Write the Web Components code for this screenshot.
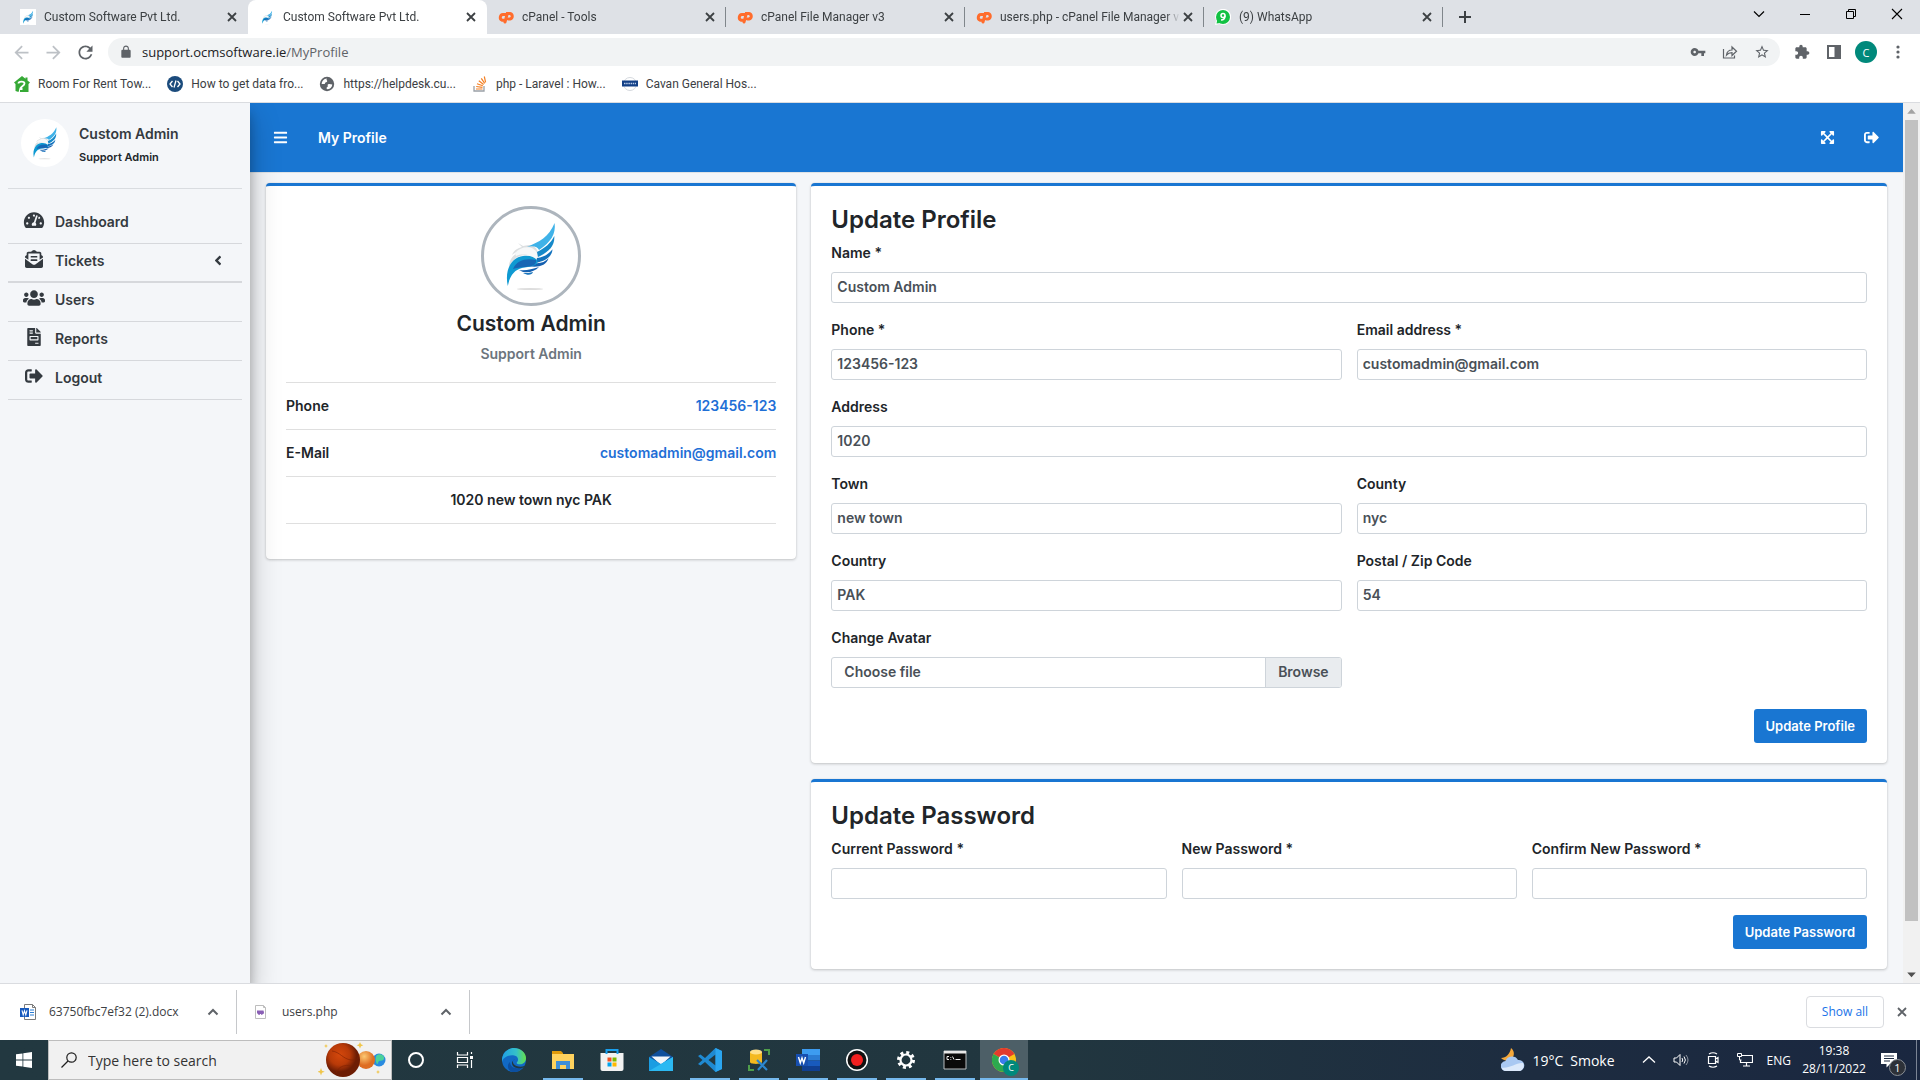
<!DOCTYPE html>
<html lang="en">
<head>
<meta charset="utf-8">
<title>Custom Software Pvt Ltd.</title>
<style>
  html, body { margin: 0; height: 100%; }
  body { overflow: hidden; font-family: "Open Sans", "Noto Sans", sans-serif; font-size: 12px; color: #3c4043; }
</style>
</head>
<body>
<desktop-screen></desktop-screen>
<script>
/* ---------- icon library: [viewBox, markup] ---------- */
const bird = `
  <g>
    <path d="M37 37l5 3 6-1c5 0 8 3 9 8l-1 7c-2-4-6-5-11-5-8 0-13 4-17 12 0-8 5-13 11-15-4 0-6 1-8 3 2-5 6-7 10-8z" fill="#dcdfe1"/>
    <path d="M34 47c6-7 18-8 22 0 1 3 0 5-1 7-4-5-13-7-20-4z" fill="#f6f8f9"/>
    <path d="M46 41c12-5 22-10 27.6-24C75 28 70 36 58 44c-1-3-6-5-12-3z" fill="#3fb2e8"/>
    <path d="M56 46c8-4 14-9 17.300-16C74 40 68 46 57 51z" fill="#1689c9"/>
    <path d="M56 52c7-1 12-4 15.500-8.700C71 51 64 55 55 57z" fill="#1272bd"/>
    <path d="M53 57c6 1 11-1 14.600-4.700C65 60 57 62 46 60z" fill="#1560b0"/>
    <path d="M26.800 80C23 62 32 51 42 50c7-1 11 1 14 4 2 4-3 6-9 7-10 1-17 4-20.200 19z" fill="#0f9ad2"/>
    <path d="M32 63c4-9 13-11 23-9 1 5-4 6-10 7-6 0-10 1-13 2z" fill="#1766b4"/>
    <path d="M38 64c7 1 13-1 20-3-4 4-9 6-16 5z" fill="#1560b0"/>
    <path d="M42 67c4 0 7 0 10-1-1 3-5 4-10 1z" fill="#1a75bd"/>
    <ellipse cx="49" cy="83" rx="13" ry="1" fill="#dddddd"/>
  </g>`;
const cp = `<g fill="none" stroke="#ff6c2c" stroke-width="3"><path d="M8 5.500H5a3 3 0 0 0-1 5.700h2" stroke-linecap="round"/><path d="M7 13l2.300-8.500H12a2.800 2.800 0 0 1 0 5.500h-1.500" stroke-linecap="round"/></g>`;
const ICONS = {
  bird: ['0 0 100 100', bird],
  birdfav: ['10 8 78 78', '<rect x="10" y="8" width="78" height="78" fill="#fff"/>' + bird],
  cpanel: ['0 0 16 16', cp],
  whatsapp: ['0 0 16 16', '<path d="M0 16l1-4.500A8 8 0 1 1 4.500 15z" fill="#fff"/><circle cx="8" cy="8" r="7" fill="#12c143"/><path d="M1.500 14.500L2.500 10l3 4z" fill="#12c143"/><circle cx="8" cy="6.400" r="2" fill="none" stroke="#fff" stroke-width="1.500"/><path d="M10 6.500c0 3-1 4.500-4 4.500" fill="none" stroke="#fff" stroke-width="1.500"/>'],
  close: ['0 0 16 16', '<path d="M4 4l8 8M12 4l-8 8" stroke="currentColor" stroke-width="1.800"/>'],
  plus: ['0 0 16 16', '<path d="M8 2v12M2 8h12" stroke="currentColor" stroke-width="2"/>'],
  down: ['0 0 16 16', '<path d="M3 5.500l5 5 5-5" fill="none" stroke="currentColor" stroke-width="1.200"/>'],
  up: ['0 0 16 16', '<path d="M3.500 10.500L8 6l4.500 4.500" fill="none" stroke="currentColor" stroke-width="2"/>'],
  min: ['0 0 16 16', '<path d="M3 8.500h10" stroke="currentColor"/>'],
  restore: ['0 0 16 16', '<path d="M3.500 5.500h7v7h-7zM5.500 5.500v-2h7v7h-2" fill="none" stroke="currentColor"/>'],
  winclose: ['0 0 16 16', '<path d="M3 3l10 10M13 3L3 13" stroke="currentColor" stroke-width="1.100"/>'],
  back: ['0 0 24 24', '<path d="M20 11H7.830l5.590-5.590L12 4l-8 8 8 8 1.410-1.410L7.830 13H20v-2z"/>'],
  forward: ['0 0 24 24', '<path d="M4 11h12.170l-5.590-5.590L12 4l8 8-8 8-1.410-1.410L16.170 13H4v-2z"/>'],
  reload: ['0 0 24 24', '<path d="M17.650 6.350C16.200 4.900 14.210 4 12 4c-4.420 0-7.990 3.580-7.990 8s3.570 8 7.990 8c3.730 0 6.840-2.550 7.730-6h-2.080c-.82 2.330-3.040 4-5.650 4-3.310 0-6-2.690-6-6s2.690-6 6-6c1.660 0 3.140.69 4.220 1.780L13 11h7V4l-2.350 2.350z"/>'],
  lock: ['0 0 24 24', '<path d="M18 8h-1V6c0-2.760-2.240-5-5-5S7 3.240 7 6v2H6c-1.100 0-2 .9-2 2v10c0 1.100.9 2 2 2h12c1.100 0 2-.9 2-2V10c0-1.100-.9-2-2-2zM15.100 8H8.900V6c0-1.710 1.390-3.100 3.100-3.100s3.100 1.390 3.100 3.100v2z"/>'],
  star: ['0 0 24 24', '<path d="M22 9.240l-7.190-.62L12 2 9.190 8.630 2 9.240l5.460 4.730L5.820 21 12 17.270 18.180 21l-1.630-7.030L22 9.240zM12 15.400l-3.760 2.270 1-4.280-3.320-2.880 4.380-.38L12 6.100l1.710 4.040 4.380.38-3.320 2.880 1 4.280L12 15.400z"/>'],
  puzzle: ['0 0 24 24', '<path d="M20.500 11H19V7c0-1.100-.9-2-2-2h-4V3.500C13 2.120 11.880 1 10.500 1S8 2.120 8 3.500V5H4c-1.100 0-1.990.9-1.990 2v3.800H3.500c1.490 0 2.700 1.210 2.700 2.700s-1.210 2.700-2.700 2.700H2V20c0 1.100.9 2 2 2h3.800v-1.500c0-1.490 1.210-2.700 2.700-2.700 1.490 0 2.700 1.210 2.700 2.700V22H17c1.100 0 2-.9 2-2v-4h1.500c1.380 0 2.500-1.120 2.500-2.500S21.880 11 20.500 11z"/>'],
  key: ['0 0 24 24', '<path d="M12.650 10C11.830 7.670 9.610 6 7 6c-3.310 0-6 2.690-6 6s2.690 6 6 6c2.610 0 4.830-1.670 5.650-4H17v4h4v-4h2v-4H12.650zM7 14c-1.100 0-2-.9-2-2s.9-2 2-2 2 .9 2 2-.9 2-2 2z"/>'],
  share: ['0 0 16 16', '<path d="M1.500 5v9h11v-2.500M4.500 11C5 7.500 7 6 10 6V3l4.500 4.300L10 11.500V8.700C7.500 8.700 6 9.300 4.500 11z" fill="none" stroke="currentColor" stroke-width="1.200"/>'],
  panel: ['0 0 16 16', '<path d="M1 1h14v14H1zM3 3v10h5.500V3z" fill-rule="evenodd"/>'],
  dots: ['0 0 16 16', '<circle cx="8" cy="3" r="1.600"/><circle cx="8" cy="8" r="1.600"/><circle cx="8" cy="13" r="1.600"/>'],
  house: ['0 0 16 16', '<path d="M8 0L0 6.500l1.500 1.500V15l3 1 1.500-5V16h8.500V8L16 6.500l-2.500-2V1.500h-2v1.200z" fill="#36a936"/><path d="M4.500 7.500c0-2.500 6-2.500 6 0S6.500 10 6.500 13h2" fill="none" stroke="#fff" stroke-width="1.800"/>'],
  code: ['0 0 16 16', '<circle cx="8" cy="8" r="8" fill="#1b4b7c"/><path d="M5.500 5L3 8l2.500 3M10.500 5L13 8l-2.500 3M9 4.500l-2 7" fill="none" stroke="#fff" stroke-width="1.300"/>'],
  globe: ['0 0 16 16', '<circle cx="8" cy="8" r="7.200" fill="#5f6368"/><path d="M8 2.500c-1.500 1.500 1 2 0 3.200S5.500 6 6 8H2.700c0-3 2.300-5.300 5.300-5.500zM13.300 8.500c-1.500 0-2.500-1-4-.3s.3 2-1 2.800-.5 1.500-.3 2.300c3 0 5-2 5.300-4.800z" fill="#fff"/>'],
  stack: ['0 0 16 16', '<path d="M2 10v5h10v-5" fill="none" stroke="#9aa0a6" stroke-width="1.300"/><path d="M4 13h6.500M4.200 10.500l6.300.8M5 7.800l5.800 2M6.800 4.800l4.800 3.700M9.300 2.300l3.400 5M12.300.500l1.300 5.800" stroke="#f48024" stroke-width="1.200"/>'],
  cavan: ['0 0 16 16', '<circle cx="8" cy="8" r="6.500" fill="none" stroke="#d5d9de"/><path d="M0 4.500h16v6H0z" fill="#123f86"/><path d="M2 7.500h12" stroke="#b9cbe8" stroke-width="1.600" stroke-dasharray="1.500 .7"/>'],
  bars: ['0 0 448 512', '<path d="M16 132h416c8.837 0 16-7.163 16-16V76c0-8.837-7.163-16-16-16H16C7.163 60 0 67.163 0 76v40c0 8.837 7.163 16 16 16zm0 160h416c8.837 0 16-7.163 16-16v-40c0-8.837-7.163-16-16-16H16c-8.837 0-16 7.163-16 16v40c0 8.837 7.163 16 16 16zm0 160h416c8.837 0 16-7.163 16-16v-40c0-8.837-7.163-16-16-16H16c-8.837 0-16 7.163-16 16v40c0 8.837 7.163 16 16 16z"/>'],
  signout: ['0 0 512 512', '<path d="M497 273L329 441c-15 15-41 4.500-41-17v-96H152c-13.300 0-24-10.700-24-24v-96c0-13.300 10.700-24 24-24h136V88c0-21.400 25.900-32 41-17l168 168c9.300 9.400 9.300 24.600 0 34zM192 436v-40c0-6.600-5.400-12-12-12H96c-17.700 0-32-14.300-32-32V160c0-17.700 14.300-32 32-32h84c6.600 0 12-5.400 12-12V76c0-6.600-5.400-12-12-12H96c-53 0-96 43-96 96v192c0 53 43 96 96 96h84c6.600 0 12-5.400 12-12z"/>'],
  users: ['0 0 640 512', '<path d="M96 224c35.300 0 64-28.700 64-64s-28.700-64-64-64-64 28.700-64 64 28.700 64 64 64zm448 0c35.300 0 64-28.700 64-64s-28.700-64-64-64-64 28.700-64 64 28.700 64 64 64zm32 32h-64c-17.600 0-33.500 7.100-45.100 18.600 40.300 22.100 68.900 62 75.100 109.400h66c17.700 0 32-14.300 32-32v-32c0-35.300-28.700-64-64-64zm-256 0c61.900 0 112-50.100 112-112S381.900 32 320 32 208 82.100 208 144s50.100 112 112 112zm76.800 32h-8.300c-20.800 10-43.900 16-68.500 16s-47.600-6-68.500-16h-8.300C179.600 288 128 339.600 128 403.200V432c0 26.500 21.500 48 48 48h288c26.500 0 48-21.500 48-48v-28.800c0-63.600-51.600-115.200-115.200-115.200zm-223.700-13.400C161.500 263.100 145.600 256 128 256H64c-35.300 0-64 28.700-64 64v32c0 17.700 14.300 32 32 32h65.900c6.300-47.400 34.900-87.300 75.200-109.400z"/>'],
  gauge: ['0 0 576 512', '<path d="M288 32C128.940 32 0 160.940 0 320c0 52.800 14.250 102.260 39.060 144.800 5.610 9.620 16.300 15.200 27.440 15.200h443c11.140 0 21.830-5.580 27.440-15.200C561.750 422.260 576 372.800 576 320c0-159.060-128.940-288-288-288zm0 64c14.710 0 26.580 10.130 30.320 23.650-1.110 2.260-2.640 4.230-3.450 6.670l-9.220 27.670c-5.130 3.490-10.970 6.010-17.640 6.010-17.670 0-32-14.330-32-32S270.330 96 288 96zM96 384c-17.670 0-32-14.330-32-32s14.330-32 32-32 32 14.330 32 32-14.330 32-32 32zm48-160c-17.670 0-32-14.330-32-32s14.330-32 32-32 32 14.330 32 32-14.330 32-32 32zm246.770-72.410l-61.330 184C343.130 347.330 352 364.540 352 384c0 11.720-3.380 22.550-8.880 32H232.880c-5.500-9.450-8.880-20.280-8.880-32 0-33.940 26.500-61.430 59.900-63.590l61.340-184.010c4.170-12.560 17.730-19.450 30.360-15.170 12.570 4.190 19.350 17.790 15.170 30.360zm14.660 57.200l15.520-46.550c3.470-1.290 7.130-2.230 11.050-2.230 17.670 0 32 14.330 32 32s-14.330 32-32 32c-11.380-.01-20.890-6.280-26.570-15.220zM480 384c-17.670 0-32-14.330-32-32s14.330-32 32-32 32 14.330 32 32-14.330 32-32 32z"/>'],
  invoice: ['0 0 384 512', '<path d="M288 256H96v64h192v-64zm89-151L279.100 7c-4.500-4.500-10.600-7-17-7H256v128h128v-6.100c0-6.300-2.500-12.400-7-16.900zm-153 31V0H24C10.700 0 0 10.700 0 24v464c0 13.300 10.700 24 24 24h336c13.300 0 24-10.700 24-24V160H248c-13.200 0-24-10.800-24-24zM64 72c0-4.420 3.580-8 8-8h80c4.420 0 8 3.580 8 8v16c0 4.420-3.580 8-8 8H72c-4.420 0-8-3.580-8-8V72zm0 64c0-4.420 3.580-8 8-8h80c4.420 0 8 3.580 8 8v16c0 4.420-3.580 8-8 8H72c-4.420 0-8-3.580-8-8v-16zm256 304c0 4.420-3.580 8-8 8h-80c-4.420 0-8-3.580-8-8v-16c0-4.420 3.580-8 8-8h80c4.420 0 8 3.580 8 8v16zm0-200v96c0 8.840-7.160 16-16 16H80c-8.840 0-16-7.160-16-16v-96c0-8.840 7.160-16 16-16h224c8.840 0 16 7.160 16 16z"/>'],
  envelope: ['0 0 512 512', '<path d="M176 216h160c8.840 0 16-7.160 16-16v-16c0-8.840-7.160-16-16-16H176c-8.840 0-16 7.160-16 16v16c0 8.840 7.160 16 16 16zm-16 80c0 8.840 7.160 16 16 16h160c8.840 0 16-7.160 16-16v-16c0-8.840-7.160-16-16-16H176c-8.840 0-16 7.160-16 16v16zm96 121.130c-16.420 0-32.840-5.060-46.860-15.190L0 250.860V464c0 26.510 21.490 48 48 48h416c26.510 0 48-21.490 48-48V250.860L302.860 401.940c-14.020 10.120-30.440 15.190-46.860 15.190zm237.610-254.180c-8.850-6.940-17.240-13.470-29.610-22.810V96c0-26.510-21.490-48-48-48h-77.550c-3.040-2.200-5.870-4.260-9.040-6.560C312.600 29.170 279.200-.35 256 0c-23.200-.35-56.590 29.170-73.410 41.440-3.170 2.300-6 4.360-9.040 6.560H96c-26.510 0-48 21.490-48 48v44.140c-12.370 9.330-20.760 15.870-29.610 22.810A47.995 47.995 0 0 0 0 200.720v10.650l96 69.350V96h320v184.720l96-69.350v-10.650c0-14.740-6.780-28.670-18.390-37.770z"/>'],
  angle: ['0 0 256 512', '<path d="M31.700 239l136-136c9.400-9.400 24.600-9.400 33.900 0l22.600 22.600c9.400 9.400 9.400 24.600 0 33.900L127.900 256l96.400 96.400c9.400 9.400 9.400 24.600 0 33.900L201.700 409c-9.400 9.400-24.600 9.400-33.900 0l-136-136c-9.500-9.400-9.500-24.600-.1-34z"/>'],
  expand: ['0 0 448 512', '<path d="M448 344v112a23.940 23.940 0 0 1-24 24H312c-21.390 0-32.090-25.900-17-41l36.200-36.200L224 295.600 116.770 402.900 153 439c15.090 15.100 4.390 41-17 41H24a23.940 23.940 0 0 1-24-24V344c0-21.400 25.890-32.100 41-17l36.190 36.200L184.460 256 77.180 148.700 41 185c-15.100 15.100-41 4.400-41-17V56a23.940 23.940 0 0 1 24-24h112c21.390 0 32.090 25.900 17 41l-36.200 36.200L224 216.400l107.230-107.300L295 73c-15.090-15.100-4.390-41 17-41h112a23.940 23.940 0 0 1 24 24v112c0 21.400-25.890 32.100-41 17l-36.190-36.200L263.540 256l107.280 107.300L407 327.100c15.100-15.200 41-4.500 41 16.900z"/>'],
  docx: ['0 0 16 16', '<path d="M4.500.5h8l3 3v12h-11z" fill="#fff" stroke="#7a7a7a"/><path d="M12.500.5v3h3" fill="none" stroke="#7a7a7a"/><path d="M10 6h4M10 8.500h4M10 11h4" stroke="#2b7cd3"/><path d="M0 4h9v9H0z" fill="#185abd"/><path d="M2 6.300l1.200 4.500 1.300-4 1.300 4L7 6.300" fill="none" stroke="#fff" stroke-width="1.100"/>'],
  phpfile: ['0 0 16 16', '<path d="M2.500 1.500h8l2 2v11h-10z" fill="#fff" stroke="#bdbdbd"/><path d="M10.500 1.500v2h2" fill="none" stroke="#bdbdbd"/><path d="M4 6.500h6.500q1 2 0 3.500H9.500v.8H8V10H7v.8H5.500L4 9z" fill="#8a5fb5"/>'],
  win: ['0 0 16 16', '<path d="M0 2.300l6.500-.9v6.200H0zM7.300 1.300L16 0v7.600H7.300zM0 8.400h6.500v6.200L0 13.700zM7.300 8.400H16V16l-8.700-1.300z"/>'],
  search: ['0 0 16 16', '<circle cx="10.500" cy="5.500" r="4.700" fill="none" stroke="currentColor" stroke-width="1.200"/><path d="M7 9L.5 15.500" stroke="currentColor" stroke-width="1.200"/>'],
  planets: ['0 0 70 36', '<defs><radialGradient id="a" cx=".4" cy=".35"><stop offset="0" stop-color="#d5480c"/><stop offset=".6" stop-color="#b83a08"/><stop offset="1" stop-color="#6d1d04"/></radialGradient><radialGradient id="b" cx=".4" cy=".3"><stop offset="0" stop-color="#fcc873"/><stop offset="1" stop-color="#de6d22"/></radialGradient></defs><circle cx="61" cy="18" r="6.500" fill="#2a8be0"/><path d="M59 13c4-2 8 1 7 4s-5 0-6 4-4-5-1-8z" fill="#4cd19a"/><circle cx="48" cy="18" r="9" fill="url(#b)"/><circle cx="25" cy="18" r="17" fill="url(#a)"/><path d="M14 9c8 1 11 8 19 9s7-4 8-5M18 31c2-6 9-9 15-7" fill="none" stroke="#7e2204" stroke-width="1" opacity=".6"/><g fill="#f0c64a"><path d="M42 0l1 2.300 2.300 1-2.300 1-1 2.300-1-2.300-2.300-1 2.300-1zM3 26l1 2.700 2.700 1-2.700 1-1 2.700-1-2.700-2.700-1 2.700-1zM8 2l.7 1.500L10 4l-1.300.6L8 6l-.7-1.400L6 4l1.300-.5zM60 28l.7 1.500 1.300.5-1.300.6L60 32l-.7-1.400L58 30l1.300-.5z"/></g>'],
  cortana: ['0 0 24 24', '<circle cx="12" cy="12" r="7" fill="none" stroke="#fff" stroke-width="2"/>'],
  taskview: ['0 0 24 24', '<path d="M4.500 4v3h10V4M4.500 20v-3h10v3M4.500 9.500h10v5h-10zM18.500 4v2M18.500 12v8" fill="none" stroke="#fff" stroke-width="1.200"/><path d="M17 8h3v3h-3z" fill="#fff"/>'],
  edge: ['0 0 24 24', '<defs><linearGradient id="e" x1="0" x2="1"><stop offset="0" stop-color="#1fa0e6"/><stop offset=".6" stop-color="#35c1c8"/><stop offset="1" stop-color="#66e04a"/></linearGradient></defs><circle cx="12" cy="12" r="12" fill="#1169c4"/><path d="M0 11.500C.5 5 5.500 0 12 0s12 4.700 12 10c0 4-3 6.300-6 6.300-2.500 0-4-1-3-2 2.500-3 .5-6.800-4-7C5.500 7 1 9.500 0 14z" fill="url(#e)"/><path d="M8 14c0 5 5 8 13 5-2 3-5.500 5-9 5C6 24 4 17 8 14z" fill="#0c4fa0"/><path d="M13 11.500c-3 0-3 5 1.500 6.500s9 0 9.500-1v2c-3 1-8 2-11 .5s-5-6 0-8z" fill="#223840"/>'],
  explorer: ['0 0 24 24', '<path d="M1 3h9l2 2v3H1z" fill="#e09a0b"/><path d="M1 6h22v15H1z" fill="#ffd25e"/><path d="M5 21v-8h14v8h-4v-4H9v4z" fill="#3f8fd8"/>'],
  store: ['0 0 24 24', '<path d="M.5 5h23v16q0 2-2 2h-19q-2 0-2-2z" fill="#f2f2f2"/><path d="M6.500 6V2h11v4" fill="none" stroke="#1aa0ee" stroke-width="2"/><path d="M7.500 9.500h4v4h-4z" fill="#f25022"/><path d="M12.500 9.500h4v4h-4z" fill="#7fba00"/><path d="M7.500 14.500h4v4h-4z" fill="#00a4ef"/><path d="M12.500 14.500h4v4h-4z" fill="#ffb900"/>'],
  mail: ['0 0 24 24', '<path d="M0 9l12-8 12 8v6H0z" fill="#0f4f9c"/><path d="M2.500 8.500h19L12 17z" fill="#f3f6fa"/><path d="M0 9l12 7 12-7v14H0z" fill="#1b9de2"/><path d="M0 23L24 9v14z" fill="#2cb9f2"/>'],
  vscode: ['0 0 24 24', '<path d="M17.500 0L24 3v18l-6.500 3L7 14 2.500 17.500 0 16l4.500-4L0 8l2.500-1.500L7 10z" fill="#1f8ad2"/><path d="M17.500 6.500v11L10.500 12z" fill="#223840"/><path d="M17.500 0L24 3v18l-6.500 3z" fill="#2ba6f0"/>'],
  ssms: ['0 0 24 24', '<path d="M3 4v10c0 2.500 12 2.500 12 0V4z" fill="#f4b91f"/><ellipse cx="9" cy="4" rx="6" ry="2.500" fill="#ffe08a"/><path d="M17 2h5v5M7 22H2v-5" fill="none" stroke="#4f9e4b" stroke-width="2"/><path d="M10 12l10 10M20 12l-9 10" stroke="#2c87cf" stroke-width="2.200"/>'],
  word: ['0 0 24 24', '<path d="M6 1h18v6H6z" fill="#3d9cf0"/><path d="M6 7h18v5.500H6z" fill="#2b7cd3"/><path d="M6 12.500h18V18H6z" fill="#185abd"/><path d="M6 18h18v5H6z" fill="#103f91"/><path d="M0 6h12v12H0z" fill="#174fb0"/><path d="M2.500 9l1.800 6L6 10l1.700 5 1.800-6" fill="none" stroke="#fff" stroke-width="1.400"/>'],
  record: ['0 0 24 24', '<circle cx="12" cy="12" r="11" fill="#fff"/><circle cx="12" cy="12" r="9.500" fill="#111"/><circle cx="12" cy="12" r="6" fill="#f3201f"/>'],
  gear: ['0 0 24 24', '<circle cx="12" cy="12" r="7.500" fill="none" stroke="#fff" stroke-width="3" stroke-dasharray="3 2.890"/><circle cx="12" cy="12" r="5.500" fill="none" stroke="#fff" stroke-width="2.200"/>'],
  cmd: ['0 0 24 24', '<path d="M1 3h22v18H1z" fill="#0a0a0a" stroke="#b9bdc0"/><path d="M1 3h22v2.500H1z" fill="#e8e8e8"/><path d="M6 8.500H4v3h2M7.800 9v.8M7.800 11v.8M9.500 8.500l1.500 3M12.500 11.500h5" fill="none" stroke="#eee"/>'],
  chrome: ['0 0 24 24', '<circle cx="12" cy="12" r="12" fill="#fbc116"/><path d="M12 12L1.600 6a12 12 0 0 1 20.800 0z" fill="#e33b2e"/><path d="M12 12L1.600 6A12 12 0 0 0 12 24l4-8z" fill="#2da94f"/><circle cx="12" cy="12" r="5.500" fill="#fff"/><circle cx="12" cy="12" r="4.300" fill="#3b7ded"/>'],
  weather: ['0 0 24 24', '<path d="M10 0c4 3 4 9-1 12-3 1.500-6 .5-9-2 5 0 9-4 10-10z" fill="#f5a83a"/><path d="M5 23a5 5 0 0 1-.5-10A7 7 0 0 1 17 12a5.600 5.600 0 0 1 2 11z" fill="#a9c8f2"/><path d="M5 23a5 5 0 0 1-4.500-3.500C8 21 16 14 22 15a5.600 5.600 0 0 1-3 8z" fill="#dce9fb"/>'],
  speaker: ['0 0 16 16', '<path d="M1 6h2.500L7 2.500v11L3.500 10H1z" fill="none" stroke="currentColor"/><path d="M9 6q1.500 2 0 4M11 4.500q2.800 3.500 0 7" fill="none" stroke="currentColor"/><path d="M13 3q4 5 0 10" fill="none" stroke="currentColor" opacity=".5"/>'],
  camera: ['0 0 16 16', '<path d="M3.500 4.500h7v7h-7zM10.500 7l2.500-1.500v5L10.500 9M4 2q4-2.500 8 0M4 14q4 2.500 8 0" fill="none" stroke="currentColor" stroke-width="1.200"/>'],
  net: ['0 0 16 16', '<path d="M5 3.500h10.500v7H3.500V8M9.500 10.500v3M6 14h7" fill="none" stroke="currentColor" stroke-width="1.200"/><path d="M.5 1.500h4v3h-4zM2.500 4.500V8h2" fill="none" stroke="currentColor"/>'],
  traychev: ['0 0 16 16', '<path d="M2 10.500l6-5.500 6 5.500" fill="none" stroke="currentColor" stroke-width="1.300"/>'],
  note: ['0 0 16 16', '<path d="M0 1h16v11H9l-3.500 3.500V12H0z"/><path d="M3 4h10M3 6.500h10M3 9h6" stroke="#1c2a40" stroke-width="1"/>'],
  arrowup: ['0 0 16 16', '<path d="M4 10l4-4.500 4 4.500z"/>'],
  arrowdown: ['0 0 16 16', '<path d="M4 6l4 4.500L12 6z"/>'],
};

/* ---------- base element: render(attr) returns the shadow markup ---------- */
const define = (name, render) => customElements.define(name, class extends HTMLElement {
  constructor() { super(); this.attachShadow({ mode: 'open' }); }
  connectedCallback() {
    const t = document.createElement('template');
    t.innerHTML = '<style>*{box-sizing:border-box}button{font:inherit;color:inherit;border:0;background:none;padding:0;cursor:pointer}a{color:inherit;text-decoration:none}</style>' + render(n => this.getAttribute(n) ?? '');
    this.shadowRoot.replaceChildren(t.content.cloneNode(true));
  }
});

define('ui-icon', a => {
  const [box, body] = ICONS[a('name')];
  return `<style>:host{display:inline-flex;flex:none;width:${a('w') || a('size') || 16}px;height:${a('size') || 16}px}svg{width:100%;height:100%;display:block;fill:currentColor}</style>
  <svg viewBox="${box}" aria-hidden="true">${body}</svg>`;
});

/* ---------- browser chrome ---------- */
define('browser-tab', a => `
<style>
  :host{display:flex;align-items:center;flex:0 1 239px;min-width:0;height:34px;padding:0 8px 0 11px;position:relative;color:#3c4043;font-family:Roboto,sans-serif}
  :host([active]){background:#fff;border-radius:8px 8px 0 0}
  :host([divided])::after{content:"";position:absolute;right:0;top:7px;height:20px;width:1px;background:#80868b}
  .t{flex:1;min-width:0;margin-left:8px;overflow:hidden;white-space:nowrap;text-align:left;line-height:20px;-webkit-mask-image:linear-gradient(90deg,#000 92%,transparent)}
  .c{display:flex}
</style>
<ui-icon name="${a('icon')}"></ui-icon><button class="t" role="tab">${a('label')}</button><button class="c" aria-label="Close tab"><ui-icon name="close"></ui-icon></button>`);

define('tab-strip', () => `
<style>
  :host{display:flex;align-items:center;height:34px;background:#dee1e6;padding-left:9px}
  .new{margin-left:14px;display:flex}
  .win{margin-left:auto;display:flex;gap:30px;padding-right:15px;color:#000;height:28px;align-items:center;align-self:flex-start}
  .win button{display:flex}
</style>
<browser-tab icon="birdfav" label="Custom Software Pvt Ltd."></browser-tab>
<browser-tab icon="birdfav" label="Custom Software Pvt Ltd." active></browser-tab>
<browser-tab icon="cpanel" label="cPanel - Tools" divided></browser-tab>
<browser-tab icon="cpanel" label="cPanel File Manager v3" divided></browser-tab>
<browser-tab icon="cpanel" label="users.php - cPanel File Manager v" divided></browser-tab>
<browser-tab icon="whatsapp" label="(9) WhatsApp" divided></browser-tab>
<button class="new" aria-label="New tab"><ui-icon name="plus"></ui-icon></button>
<div class="win">
  <button aria-label="Search tabs"><ui-icon name="down"></ui-icon></button>
  <button aria-label="Minimise"><ui-icon name="min"></ui-icon></button>
  <button aria-label="Restore"><ui-icon name="restore"></ui-icon></button>
  <button aria-label="Close window"><ui-icon name="winclose"></ui-icon></button>
</div>`);

define('browser-toolbar', () => `
<style>
  :host{display:flex;align-items:center;height:36px;padding:0 14px 0 11px;color:#5f6368;background:#fff}
  button{display:flex}
  .nav{display:flex;gap:11px;margin-right:12px}
  .nav .off{color:#bdc1c6}
  .box{flex:1;display:flex;align-items:center;height:28px;border-radius:14px;background:#f1f3f4;padding:0 10px 0 11px;font-size:13px}
  .box label{color:#202124;margin-left:9px}
  .box input{flex:1;min-width:0;border:0;background:none;padding:0;font:inherit;color:#5f6368;outline:0}
  .acts,.ext{display:flex;align-items:center;gap:16px}
  .ext{margin-left:14px}
  .me{width:22px;height:22px;border-radius:50%;background:#00897b;color:#fff;justify-content:center;align-items:center;font-size:11px;margin:0 -3px}
</style>
<div class="nav">
  <button class="off" aria-label="Back"><ui-icon name="back" size="21"></ui-icon></button>
  <button class="off" aria-label="Forward"><ui-icon name="forward" size="21"></ui-icon></button>
  <button aria-label="Reload"><ui-icon name="reload" size="21"></ui-icon></button>
</div>
<div class="box">
  <ui-icon name="lock" size="14"></ui-icon>
  <label for="url">support.ocmsoftware.ie</label><input id="url" value="/MyProfile">
  <div class="acts">
    <button aria-label="Passwords"><ui-icon name="key"></ui-icon></button>
    <button aria-label="Share"><ui-icon name="share"></ui-icon></button>
    <button aria-label="Bookmark"><ui-icon name="star"></ui-icon></button>
  </div>
</div>
<div class="ext">
  <button aria-label="Extensions"><ui-icon name="puzzle"></ui-icon></button>
  <button aria-label="Side panel"><ui-icon name="panel"></ui-icon></button>
  <button class="me">C</button>
  <button aria-label="Menu"><ui-icon name="dots"></ui-icon></button>
</div>`);

define('bookmark-link', a => `
<style>:host{display:flex}a{display:flex;align-items:center;gap:8px;white-space:nowrap;line-height:20px}</style>
<a href="#"><ui-icon name="${a('icon')}"></ui-icon><slot></slot></a>`);

define('bookmark-bar', () => `
<style>:host{display:flex;align-items:center;gap:16px;height:33px;padding:0 14px 5px;background:#fff;border-bottom:1px solid #dadce0;font-family:Roboto,sans-serif}</style>
<bookmark-link icon="house">Room For Rent Tow...</bookmark-link>
<bookmark-link icon="code">How to get data fro...</bookmark-link>
<bookmark-link icon="globe">https://helpdesk.cu...</bookmark-link>
<bookmark-link icon="stack">php - Laravel : How...</bookmark-link>
<bookmark-link icon="cavan">Cavan General Hos...</bookmark-link>`);

/* ---------- site ---------- */
define('nav-item', a => `
<style>
  :host{display:block;height:39px;border-bottom:1px solid #d6d8dc}
  :host([open]){border-bottom-width:2px}
  a{display:flex;align-items:center;height:33px;padding:0 18px 0 14px;font-size:14px;line-height:21px}
  .i{width:24px;display:flex;justify-content:center;margin-right:9px;padding-bottom:3px}
  .more{margin-left:auto}
</style>
<a href="#"><span class="i"><ui-icon name="${a('icon')}" size="18" w="22"></ui-icon></span><slot></slot>${a('more') ? '<ui-icon class="more" name="angle" size="15" w="12"></ui-icon>' : ''}</a>`);

define('side-bar', () => `
<style>
  :host{display:block;width:250px;flex:none;background:#f4f6f9;padding:0 8px;color:#343a40;position:relative;z-index:2;box-shadow:0 14px 28px rgba(0,0,0,.25),0 10px 10px rgba(0,0,0,.22)}
  .user{display:flex;gap:10px;height:86px;padding:16px 0 0 13px;border-bottom:1px solid #d9dce0;margin-bottom:16px}
  .pic{width:48px;height:48px;border-radius:50%;background:#fff}
  .name{font-size:14px;line-height:22px;padding-top:4px}
  .role{font-size:11px;line-height:24px;color:#212529}
</style>
<div class="user"><span class="pic"><ui-icon name="bird" size="48"></ui-icon></span>
  <div><div class="name">Custom Admin</div><div class="role">Support Admin</div></div></div>
<nav>
  <nav-item icon="gauge">Dashboard</nav-item>
  <nav-item icon="envelope" more="1" open>Tickets</nav-item>
  <nav-item icon="users">Users</nav-item>
  <nav-item icon="invoice">Reports</nav-item>
  <nav-item icon="signout">Logout</nav-item>
</nav>`);

define('top-bar', () => `
<style>
  :host{display:flex;align-items:center;height:70px;background:#1976d2;border-bottom:1px solid #dee2e6;color:#fff;padding:0 24px 0 23px;font-size:14px}
  button,a{display:flex}
  .title{margin-left:30px}
  .r{margin-left:auto;display:flex;gap:29px}
</style>
<button aria-label="Toggle menu"><ui-icon name="bars" size="15"></ui-icon></button>
<a class="title" href="#">My Profile</a>
<div class="r"><button aria-label="Full screen"><ui-icon name="expand" size="15"></ui-icon></button>
<a href="#" aria-label="Log out"><ui-icon name="signout" size="15"></ui-icon></a></div>`);

define('panel-card', a => `
<style>
  :host{display:block;background:#fff;border-top:3px solid #1976d2;border-radius:4px;padding:20px;box-shadow:0 0 1px rgba(0,0,0,.13),0 1px 3px rgba(0,0,0,.2)}
  h2{margin:0 0 8px;font-size:24px;font-weight:600;line-height:28px;color:#212529}
</style>
${a('heading') ? `<h2>${a('heading')}</h2>` : ''}<slot></slot>`);

define('fact-row', a => `
<style>
  :host{display:flex;justify-content:space-between;padding:12px 0;line-height:22px;border-bottom:1px solid #dfdfdf}
  :host([center]){justify-content:center}
  a{color:#1f6fd6}
</style><slot></slot>${a('link') ? `<a href="#">${a('link')}</a>` : ''}`);

define('profile-summary', () => `
<style>
  :host{display:block;text-align:center}
  .pic{width:100px;height:100px;border:3px solid #adb5bd;border-radius:50%;margin:0 auto 5px;display:flex;justify-content:center;align-items:center}
  h3{margin:0 0 7px;font-size:21px;line-height:25px;font-weight:600}
  p{margin:0 0 17px;line-height:22px;color:#6c757d}
  .facts{border-top:1px solid #dfdfdf;margin-bottom:15px}
</style>
<div class="pic"><ui-icon name="bird" size="100"></ui-icon></div>
<h3>Custom Admin</h3><p>Support Admin</p>
<div class="facts">
  <fact-row link="123456-123">Phone</fact-row>
  <fact-row link="customadmin@gmail.com">E-Mail</fact-row>
  <fact-row center>1020 new town nyc PAK</fact-row>
</div>`);

define('form-field', a => `
<style>
  :host{display:block;min-width:0}
  :host([wide]){grid-column:1/-1}
  label{display:block;line-height:22px;margin-bottom:8px}
  input{display:block;width:100%;height:31px;border:1px solid #ced4da;border-radius:3px;padding:0 5px 2px;font:inherit;color:#495057;background:#fff}
</style>
<label for="f">${a('label')}</label><input id="f" type="${a('type') || 'text'}" value="${a('value')}">`);

define('file-field', a => `
<style>
  :host{display:block;min-width:0}
  .l{display:block;line-height:22px;margin-bottom:8px}
  .box{position:relative;display:flex;height:31px;line-height:28px;border:1px solid #ced4da;border-radius:3px;color:#495057;overflow:hidden}
  .box input{position:absolute;inset:0;width:100%;opacity:0}
  .n{flex:1;padding-left:12px}
  .b{padding:0 12px;background:#e9ecef;border-left:1px solid #ced4da}
</style>
<label class="l" for="f">${a('label')}</label>
<div class="box"><span class="n">Choose file</span><span class="b">Browse</span><input id="f" type="file"></div>`);

define('form-grid', a => `
<style>:host{display:grid;grid-template-columns:repeat(${a('cols')},minmax(0,1fr));gap:16px 15px}</style><slot></slot>`);

define('form-actions', () => `
<style>
  :host{display:flex;justify-content:flex-end;padding-top:16px}
  :host([roomy]){padding-top:21px}
  button{height:34px;padding:0 12px;border-radius:3px;background:#1976d2;color:#fff;font-size:13px;font-weight:600}
</style><button type="submit"><slot></slot></button>`);

define('scroll-track', () => `
<style>
  :host{display:flex;flex-direction:column;width:17px;flex:none;background:#f1f1f1;align-items:center;color:#505050}
  .t{flex:801;width:13px;background:#c1c1c1}.g{flex:45}
  .u{color:#a3a3a3}
</style><ui-icon class="u" name="arrowup" size="17"></ui-icon><div class="t"></div><div class="g"></div><ui-icon name="arrowdown" size="17"></ui-icon>`);

define('site-page', () => `
<style>
  :host{display:flex;min-height:0;overflow:hidden;background:#f4f6f9;font-family:Inter,sans-serif;font-size:14px;font-weight:600;color:#212529}
  main{flex:1;min-width:0}
  .cols{display:grid;grid-template-columns:calc((100% + 15px) / 3 - 15px) minmax(0,1fr);gap:15px;align-items:start;padding:10px 16px}
  .stack{display:grid;gap:16px}
</style>
<side-bar></side-bar>
<main>
  <top-bar></top-bar>
  <div class="cols">
    <panel-card><profile-summary></profile-summary></panel-card>
    <div class="stack">
      <panel-card heading="Update Profile">
        <form-grid cols="2">
          <form-field wide label="Name *" value="Custom Admin"></form-field>
          <form-field label="Phone *" value="123456-123"></form-field>
          <form-field label="Email address *" value="customadmin@gmail.com"></form-field>
          <form-field wide label="Address" value="1020"></form-field>
          <form-field label="Town" value="new town"></form-field>
          <form-field label="County" value="nyc"></form-field>
          <form-field label="Country" value="PAK"></form-field>
          <form-field label="Postal / Zip Code" value="54"></form-field>
          <file-field label="Change Avatar"></file-field>
        </form-grid>
        <form-actions roomy>Update Profile</form-actions>
      </panel-card>
      <panel-card heading="Update Password">
        <form-grid cols="3">
          <form-field label="Current Password *" type="password"></form-field>
          <form-field label="New Password *" type="password"></form-field>
          <form-field label="Confirm New Password *" type="password"></form-field>
        </form-grid>
        <form-actions>Update Password</form-actions>
      </panel-card>
    </div>
  </div>
</main>
<scroll-track></scroll-track>`);

/* ---------- download shelf ---------- */
define('download-item', a => `
<style>
  :host{display:flex;align-items:center;height:44px;width:233px;padding:0 15px 0 16px;border-right:1px solid #c6c8cb;font-size:12px;color:#3c4043}
  a{flex:1;margin-left:13px;line-height:20px}
  button{display:flex;color:#5f6368}
</style>
<ui-icon name="${a('icon')}"></ui-icon><a href="#"><slot></slot></a><button aria-label="Options"><ui-icon name="up"></ui-icon></button>`);

define('download-shelf', () => `
<style>
  :host{display:flex;align-items:center;height:57px;border-top:1px solid #dadce0;background:#fff;padding:0 10px 0 4px}
  .all{margin-left:auto;width:78px;height:32px;border:1px solid #dadce0;border-radius:4px;color:#1a73e8;font-size:12px;padding-bottom:1px}
  .x{display:flex;margin-left:10px;color:#5f6368}
</style>
<download-item icon="docx">63750fbc7ef32 (2).docx</download-item>
<download-item icon="phpfile">users.php</download-item>
<button class="all">Show all</button>
<button class="x" aria-label="Close shelf"><ui-icon name="close"></ui-icon></button>`);

/* ---------- taskbar ---------- */
define('task-app', a => `
<style>
  :host{display:block;width:48px;height:40px}
  :host([active]){background:#4d5f67}
  button{position:relative;display:flex;justify-content:center;align-items:center;width:100%;height:100%;border-bottom:2px solid transparent;padding-top:2px}
  :host([running]) button::after{content:"";position:absolute;left:4px;right:4px;bottom:-2px;height:2px;background:#76b9ed}
  :host([active]) button::after{left:0;right:0}
  b{position:absolute;right:9px;bottom:2px;width:16px;height:16px;border-radius:50%;background:#00897b;color:#fff;font-size:9px;font-weight:400;line-height:16px}
</style>
<button aria-label="${a('label')}"><ui-icon name="${a('icon')}" size="24"></ui-icon>${a('badge') ? `<b>${a('badge')}</b>` : ''}</button>`);

define('task-bar', () => `
<style>
  :host{display:flex;height:40px;background:linear-gradient(90deg,#223840,#21363f 55%,#1d2c40 80%,#1a2740);color:#fff;font-size:14px}
  .start{width:48px;display:flex;align-items:center;justify-content:center}
  .find{width:344px;display:flex;align-items:center;padding:0 3px 0 12px;background:#f1f1f1;border:1px solid #bdbdbd;color:#1f1f1f}
  .find input{flex:1;min-width:0;border:0;background:none;padding:0 0 0 11px;font:inherit;color:inherit;outline:0}
  .find input::placeholder{color:#333;opacity:1}
  .apps{display:flex;gap:1px}
  .tray{margin-left:auto;display:flex;align-items:center}
  .tray button{display:flex;align-items:center}
  .w{gap:7px;margin-right:26px}
  .i{display:flex;gap:16px;margin-right:14px}
  .lang{font-size:12px;margin-right:13px}
  .clock{font-size:12px;line-height:18px;text-align:center;width:60px;white-space:nowrap;margin-right:17px;display:flex;flex-direction:column}
  .n{position:relative;margin-right:19px}
  .n b{position:absolute;left:8px;top:7px;width:17px;height:17px;border-radius:50%;border:1px solid #8a8f96;background:#2d3138;font-size:11px;line-height:15px;font-weight:400}
  .end{width:4px;height:40px;border-left:1px solid #7b8494}
</style>
<button class="start" aria-label="Start"><ui-icon name="win"></ui-icon></button>
<div class="find"><ui-icon name="search"></ui-icon><input aria-label="Search" placeholder="Type here to search"><ui-icon name="planets" w="70" size="36"></ui-icon></div>
<div class="apps">
  <task-app icon="cortana" label="Cortana"></task-app>
  <task-app icon="taskview" label="Task view"></task-app>
  <task-app icon="edge" label="Edge"></task-app>
  <task-app icon="explorer" label="Files" running></task-app>
  <task-app icon="store" label="Store"></task-app>
  <task-app icon="mail" label="Mail"></task-app>
  <task-app icon="vscode" label="Code" running></task-app>
  <task-app icon="ssms" label="SQL tools" running></task-app>
  <task-app icon="word" label="Word" running></task-app>
  <task-app icon="record" label="Recorder" running></task-app>
  <task-app icon="gear" label="Settings" running></task-app>
  <task-app icon="cmd" label="Terminal" running></task-app>
  <task-app icon="chrome" label="Chrome" running active badge="C"></task-app>
</div>
<div class="tray">
  <button class="w"><ui-icon name="weather" size="24"></ui-icon><span>19°C</span><span>Smoke</span></button>
  <div class="i"><ui-icon name="traychev"></ui-icon><ui-icon name="speaker"></ui-icon><ui-icon name="camera"></ui-icon><ui-icon name="net"></ui-icon></div>
  <button class="lang">ENG</button>
  <button class="clock"><span>19:38</span><span>28/11/2022</span></button>
  <button class="n" aria-label="Notifications"><ui-icon name="note"></ui-icon><b>1</b></button>
  <div class="end"></div>
</div>`);

define('desktop-screen', () => `
<style>:host{display:grid;grid-template-rows:auto auto auto minmax(0,1fr) auto auto;grid-template-columns:minmax(0,1fr);height:100vh}</style>
<tab-strip></tab-strip><browser-toolbar></browser-toolbar><bookmark-bar></bookmark-bar>
<site-page></site-page>
<download-shelf></download-shelf><task-bar></task-bar>`);
</script>
</body>
</html>
